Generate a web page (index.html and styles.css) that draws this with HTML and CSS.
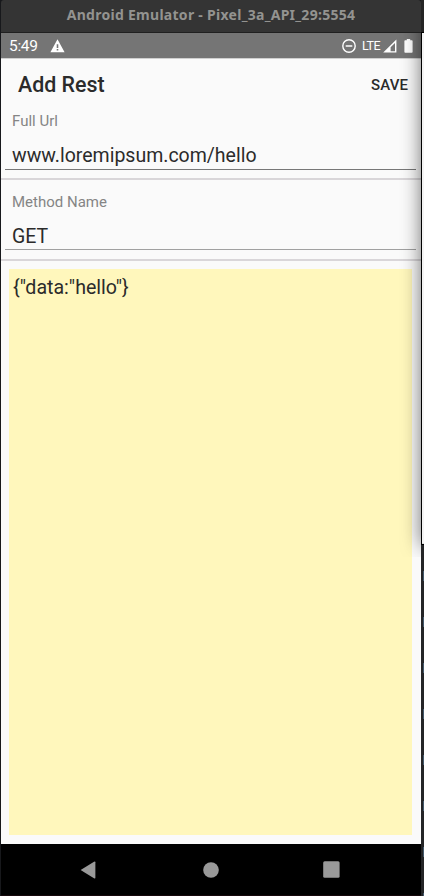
FILE: index.html
```html
<!DOCTYPE html>
<html lang="en">
<head>
<meta charset="utf-8">
<title>Add Rest</title>
<link rel="stylesheet" href="styles.css">
</head>
<body>
<div class="desktop">
  <main class="emulator">
    <header class="titlebar"><span class="window-title">Android Emulator - Pixel_3a_API_29:5554</span></header>
    <div class="statusbar">
      <span class="clock">5:49</span>
      <svg class="warning" width="15" height="14" viewBox="0 0 15 14"><path fill="#fff" fill-rule="evenodd" d="M7.5 0.3 14.6 13.2H0.4ZM6.7 5.3V9h1.6V5.3ZM6.7 10v1.6h1.6V10Z"/></svg>
      <span class="spacer"></span>
      <svg class="dnd" width="14" height="14" viewBox="0 0 14 14"><circle cx="7" cy="7" r="6.2" fill="none" stroke="#fff" stroke-width="1.4"/><path d="M3.7 7h6.6" stroke="#fff" stroke-width="1.5"/></svg>
      <span class="network">LTE</span>
      <svg class="signal" width="14" height="14" viewBox="0 0 14 14"><path fill="#fff" fill-rule="evenodd" d="M13.4.4V13.5H.2ZM12 3.9 7.6 8.3V12.2H12Z"/></svg>
      <svg class="battery" width="9" height="14" viewBox="0 0 9 14"><path fill="#fff" d="M2.8 0h3.4v1.3h1.6q.8 0 .8.8v10.9q0 .8-.8.8H1.2q-.8 0-.8-.8V2.1q0-.8.8-.8h1.6Z"/></svg>
    </div>
    <section class="app">
      <div class="toolbar"><h1 class="heading">Add Rest</h1><span class="save">SAVE</span></div>
      <div class="field field-url"><span class="label">Full Url</span><div class="value">www.loremipsum.com/hello</div></div>
      <div class="field field-method"><span class="label">Method Name</span><div class="value value-method">GET</div></div>
      <div class="payload">{"data:"hello"}</div>
    </section>
    <nav class="navbar">
      <svg class="back" width="16" height="18" viewBox="0 0 16 18"><path fill="#999" d="M.6 9 14 .8q1.4-.7 1.4.4v15.6q0 1.1-1.4.4Z"/></svg>
      <svg class="home" width="16" height="16" viewBox="0 0 16 16"><circle cx="8" cy="8" r="7.8" fill="#999"/></svg>
      <svg class="recents" width="17" height="17" viewBox="0 0 17 17"><rect x=".2" y=".3" width="16.4" height="16.4" rx="1.5" fill="#999"/></svg>
    </nav>
    <div class="shade"></div>
  </main>
  <aside class="backdrop">
    <div class="backdrop-top"></div>
    <div class="backdrop-window"></div>
    <div class="backdrop-editor"></div>
  </aside>
</div>
</body>
</html>
```

FILE: styles.css
```css
* { box-sizing: border-box; }
body { margin: 0; background: #1b1c1e; font-family: Roboto, sans-serif; }
svg { flex: none; }
.desktop { display: flex; width: 424px; height: 896px; overflow: hidden; padding-left: 1px; background: #17181b; }
.emulator { position: relative; display: flex; flex-direction: column; width: 420px; height: 896px; overflow: hidden; }
.titlebar { height: 33px; background: #343434; border-bottom: 1px solid #202020; border-radius: 3px 3px 0 0; display: flex; justify-content: center; }
.window-title { font: bold 14px/30px "Noto Sans", sans-serif; letter-spacing: .28px; color: #939390; white-space: nowrap; }
.statusbar { height: 25px; background: #757575; color: #fff; display: flex; align-items: center; padding: 0 8px; }
.clock { font-size: 15.5px; line-height: 25px; padding-top: 1px; width: 41px; letter-spacing: -.3px; }
.spacer { flex: 1; }
.network { font-size: 12.5px; margin-left: 6px; width: 21px; letter-spacing: -.5px; }
.battery { margin-left: 7px; }
.app { height: 786px; background: #fafafa; border-top: 1px solid #d0d0d0; color: #2b2b2b; }
.toolbar { height: 52px; display: flex; justify-content: space-between; padding: 0 13px 0 17px; line-height: 52px; }
.heading { margin: 0; font-size: 21.4px; font-weight: 500; }
.save { font-size: 15px; font-weight: 500; letter-spacing: .1px; }
.field { border-bottom: 2px solid #d9d6d9; padding: 0 5px 0 4px; }
.field-url { height: 69px; }
.field-method { height: 81px; padding-top: 12px; }
.label { display: block; font-size: 15px; line-height: 20px; padding-left: 7px; color: #858585; }
.value { height: 39px; border-bottom: 1px solid #777; padding: 14px 0 0 7px; font-size: 19.5px; line-height: 21px; }
.value-method { height: 38px; border-color: #a0a0a0; }
.payload { height: 566px; margin: 8px 9px 0 8px; padding: 8px 4px; background: #fff7bc; font-size: 19.6px; line-height: 22px; }
.navbar { height: 52px; background: #000; border-bottom: 1px solid #16080c; display: flex; align-items: center; padding-left: 79px; }
.home { margin-left: 107px; }
.recents { margin-left: 104px; }
.shade { position: absolute; top: 33px; right: 0; width: 22px; height: 524px; overflow: hidden; }
.shade::after { content: ""; position: absolute; left: 24px; top: -30px; width: 20px; height: 541px; box-shadow: 0 0 20px 1px rgba(0,0,0,.6); }
.backdrop { width: 3px; background: #000; display: flex; flex-direction: column; }
.backdrop-top { height: 33px; background: #252525; border-bottom: 1px solid #000; }
.backdrop-window { height: 511px; margin-left: 1px; background: #f4f4f4; border-bottom: 1px solid #ddd; }
.backdrop-editor { height: 352px; border-top: 1px solid #000; background: repeating-linear-gradient(to bottom, transparent 0 26px, #43596c 26px 36px, transparent 36px 46px) right 0 top 0 / 1px 100% no-repeat, #242527; }
```
